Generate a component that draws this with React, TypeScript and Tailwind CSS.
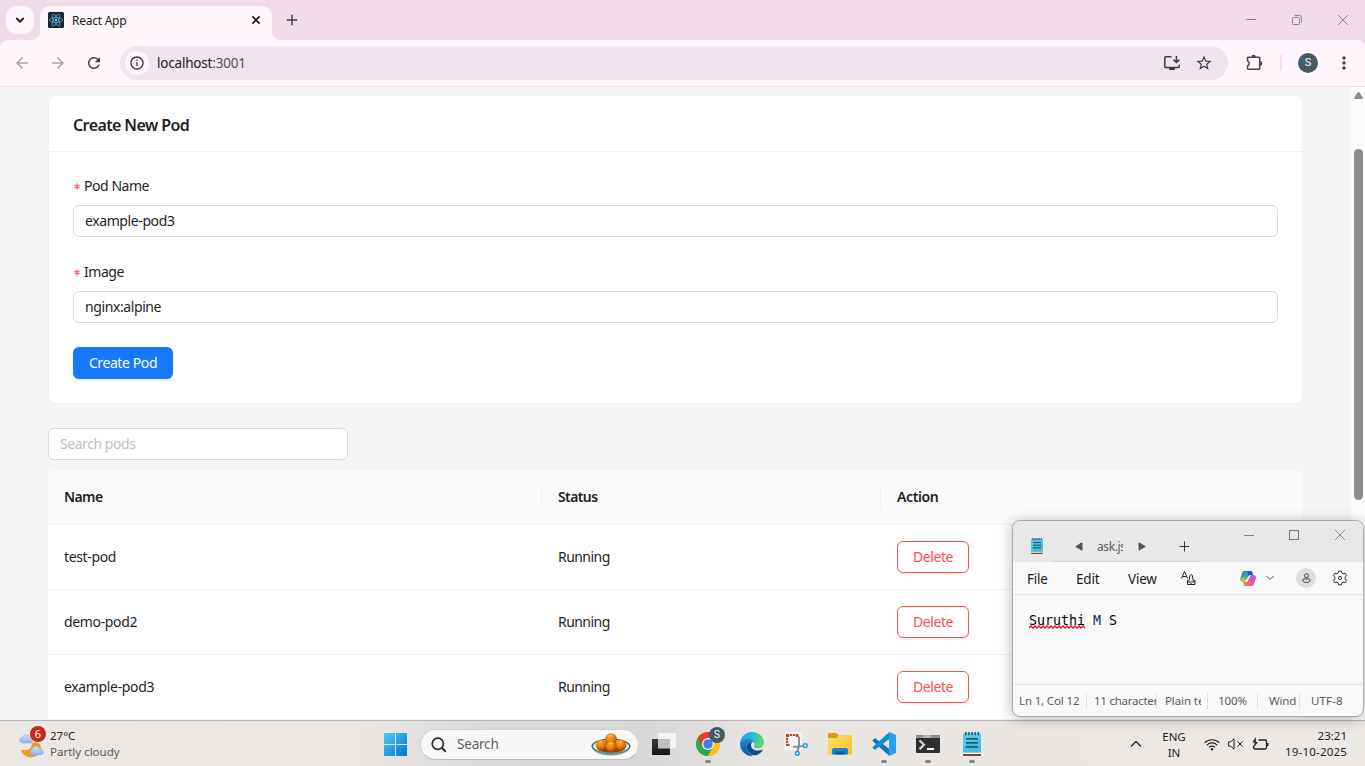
import type { ReactNode } from "react";
import {
  MdArrowBack,
  MdArrowForward,
  MdRefresh,
  MdInfoOutline,
  MdStarBorder,
  MdMoreVert,
} from "react-icons/md";

const pods = [
  { name: "test-pod", status: "Running" },
  { name: "demo-pod2", status: "Running" },
  { name: "example-pod3", status: "Running" },
];

function ReactLogo() {
  return (
    <svg width="16" height="16" viewBox="0 0 16 16">
      <rect width="16" height="16" rx="1.5" fill="#20232a" />
      <g fill="none" stroke="#4fb4cf" strokeWidth="0.8">
        <ellipse cx="8" cy="8" rx="6.6" ry="2.5" />
        <ellipse cx="8" cy="8" rx="6.6" ry="2.5" transform="rotate(60 8 8)" />
        <ellipse cx="8" cy="8" rx="6.6" ry="2.5" transform="rotate(120 8 8)" />
      </g>
      <circle cx="8" cy="8" r="1.3" fill="#61dafb" />
    </svg>
  );
}

function TabStrip() {
  return (
    <div className="flex h-10 items-start bg-[#f0dce7] pl-1.5 pt-1.5 text-[#1f1a1e]">
      <div className="flex size-7 items-center justify-center rounded-[10px] bg-[#fff7fb]">
        <svg width="10" height="8" viewBox="0 0 10 8" fill="none" stroke="#1f1a1e" strokeWidth="1.8">
          <path d="M1.3 2 5 5.7 8.7 2" />
        </svg>
      </div>
      <div className="relative ml-1.5 flex h-[34px] w-[232px] items-center rounded-t-[10px] bg-[#fff7fb] pb-1.5 pl-2 pr-2.5">
        <svg className="absolute -left-2 bottom-0" width="8" height="8" viewBox="0 0 8 8">
          <path d="M8 0v8H0a8 8 0 0 0 8-8Z" fill="#fff7fb" />
        </svg>
        <svg className="absolute -right-2 bottom-0" width="8" height="8" viewBox="0 0 8 8">
          <path d="M0 0v8h8a8 8 0 0 1-8-8Z" fill="#fff7fb" />
        </svg>
        <ReactLogo />
        <span className="ml-2 pt-0.5 text-[12px] tracking-[-0.25px]">React App</span>
        <svg className="ml-auto" width="12" height="12" viewBox="0 0 12 12" stroke="#1f1a1e" strokeWidth="1.6">
          <path d="M2.4 2.4l7.2 7.2M9.6 2.4L2.4 9.6" />
        </svg>
      </div>
      <svg className="ml-[14px] mt-2" width="12" height="12" viewBox="0 0 12 12" stroke="#4a4147" strokeWidth="1.5">
        <path d="M6 .8v10.4M.8 6h10.4" />
      </svg>
      <div className="ml-auto mr-[15px] mt-[6px] flex gap-[32px]">
        <svg width="14" height="16" viewBox="0 0 14 16" stroke="#8f838a" fill="none">
          <path d="M2 7.5h10" />
        </svg>
        <svg width="14" height="16" viewBox="0 0 14 16" stroke="#8f838a" fill="none">
          <rect x="2.5" y="5.5" width="7" height="7" rx="1" />
          <path d="M4.5 3.5h5a2 2 0 0 1 2 2v5" />
        </svg>
        <svg width="14" height="16" viewBox="0 0 14 16" stroke="#8f838a" fill="none">
          <path d="M2 3l10 10M12 3L2 13" />
        </svg>
      </div>
    </div>
  );
}

function AddressBar() {
  return (
    <div className="h-[47px] bg-[#f0dce7]">
      <div className="flex h-[47px] items-center rounded-t-lg border-b border-[#efdde7] bg-[#fff7fb] pl-[13px] pr-[11px]">
        <MdArrowBack size={18} color="#aaa2a7" className="shrink-0" />
        <MdArrowForward size={18} color="#aaa2a7" className="ml-[18px] shrink-0" />
        <MdRefresh size={18} color="#4f3d4a" className="ml-[18px] shrink-0" />
        <div className="ml-[17px] flex h-[34px] w-[1108px] shrink-0 items-center rounded-full bg-[#f0e5ee] pl-[5px] pr-[15px]">
          <div className="flex size-6 items-center justify-center rounded-full bg-[#fff7fb]">
            <MdInfoOutline size={16} color="#3d353a" />
          </div>
          <span className="ml-2 text-[13.5px] tracking-[-0.2px] text-[#1f1a1e]">
            localhost<span className="text-[#5a4f57]">:3001</span>
          </span>
          <svg className="ml-auto" width="18" height="18" viewBox="0 0 18 18" fill="none" stroke="#41383e" strokeWidth="1.5">
            <path d="M8.5 2.7H2.6a.8.8 0 0 0-.8.8v9.2c0 .5.3.8.8.8h12.8c.5 0 .8-.3.8-.8v-2M13.4 2v6M10.5 5.600l2.900 2.900 2.900-2.900" />
            <path d="M6.2 15h5.6" strokeWidth="2" />
          </svg>
          <MdStarBorder size={18} color="#41383e" className="ml-[14px]" />
        </div>
        <svg className="ml-[17px] shrink-0" width="18" height="18" viewBox="0 0 18 18">
          <path
            d="M3.2 3.300h10.800c.4 0 .7.3.7.7v10.500c0 .4-.3.7-.7.7H3.200c-.4 0-.7-.3-.7-.7v-2.600a2.700 2.700 0 0 0 0-5V4c0-.4.3-.7.7-.7Z"
            fill="none"
            stroke="#4f3d4a"
            strokeWidth="1.5"
          />
          <path d="M6.400 2.900a2.200 2.200 0 0 1 4.400 0ZM15.100 7.200a2.200 2.200 0 0 1 0 4.400Z" fill="#4f3d4a" />
        </svg>
        <div className="ml-[17px] h-4 w-0.5 shrink-0 bg-[#ffd6f1]" />
        <div className="ml-4 flex size-5 shrink-0 items-center justify-center rounded-full bg-[#455a64] font-['Roboto'] text-[11px] text-white">
          S
        </div>
        <MdMoreVert size={20} color="#4f3d4a" className="ml-4 shrink-0" />
      </div>
    </div>
  );
}

function Asterisk() {
  return (
    <svg className="mr-[4px] ml-px" width="6" height="7" viewBox="0 0 6 7" stroke="#ff4d4f" strokeWidth="1.100">
      <path d="M3 .3v6.400M.3 1.900l5.400 3.200M5.700 1.900L.3 5.100" />
    </svg>
  );
}

function Field({ label, value }: { label: string; value: string }) {
  return (
    <div className="mb-6">
      <div className="flex h-[30px] items-center pb-2 text-[14px]">
        <Asterisk />
        <span className="tracking-[-0.45px]">{label}</span>
      </div>
      <div className="flex h-8 items-center rounded-md border border-[#d9d9d9] bg-white px-[11px] tracking-[-0.4px]">
        {value}
      </div>
    </div>
  );
}

function CreateCard() {
  return (
    <div className="mx-12 h-[309px] rounded-lg border border-[#f0f0f0] bg-white">
      <div className="flex h-14 items-center border-b border-[#f0f0f0] px-6 pt-0.5 text-[16px] font-semibold tracking-[-0.6px]">
        Create New Pod
      </div>
      <div className="px-6 pt-[23px]">
        <Field label="Pod Name" value="example-pod3" />
        <Field label="Image" value="nginx:alpine" />
        <button className="block h-8 w-[100px] rounded-md bg-[#1677ff] text-[14px] tracking-[-0.4px] text-white shadow-[0_2px_0_rgba(5,145,255,0.1)]">
          Create Pod
        </button>
      </div>
    </div>
  );
}

function PodTable() {
  return (
    <div className="mx-12 mt-2.5 overflow-hidden rounded-t-lg bg-white tracking-[-0.35px]">
      <div className="grid h-[55px] grid-cols-[494px_339px_1fr] items-center border-b border-[#f0f0f0] bg-[#fafafa] font-semibold tracking-[-0.6px]">
        <div className="flex h-[22px] items-center border-r border-[#f0f0f0] pl-4">Name</div>
        <div className="flex h-[22px] items-center border-r border-[#f0f0f0] pl-4">Status</div>
        <div className="pl-4 tracking-[-0.4px]">Action</div>
      </div>
      {pods.map((pod) => (
        <div key={pod.name} className="grid h-[65px] grid-cols-[494px_339px_1fr] items-center border-b border-[#f0f0f0]">
          <div className="pl-4">{pod.name}</div>
          <div className="pl-4 tracking-[-0.55px]">{pod.status}</div>
          <div className="pl-4">
            <button className="block h-8 w-[72px] rounded-md border border-[#ff4d4f] bg-white tracking-[-0.45px] text-[#ff4d4f] shadow-[0_2px_0_rgba(255,38,5,0.06)]">
              Delete
            </button>
          </div>
        </div>
      ))}
    </div>
  );
}

function Page() {
  return (
    <div className="flex h-[633px] overflow-hidden bg-[#f5f5f5]">
      <div className="w-[1351px] pt-2 text-[14px] leading-[22px] text-[#1f1f1f]">
        <CreateCard />
        <div className="ml-12 mt-6 flex h-8 w-[300px] items-center rounded-md border border-[#d9d9d9] bg-white px-[11px] tracking-[-0.45px] text-[#bfbfbf]">
          Search pods
        </div>
        <PodTable />
      </div>
      <div className="flex w-[14px] flex-col items-center bg-[#fcfcfc] pl-px pt-[5px]">
        <svg width="9" height="7" viewBox="0 0 9 7">
          <path d="M3.6.6a1 1 0 0 1 1.8 0L8.8 5.600c.3.6 0 1.400-.8 1.400H1C.2 7-.1 6.200.2 5.600Z" fill="#8b8b8b" />
        </svg>
        <div className="mt-[50px] h-[351px] w-[9px] rounded-full bg-[#8b8b8b]" />
      </div>
    </div>
  );
}

function NotepadIcon({ className, size }: { className?: string; size: number }) {
  return (
    <svg className={className} width={size} height={size} viewBox="0 0 24 24">
      <rect x="3" y="20" width="18" height="4" rx="1" fill="#8a4412" />
      <path d="M3 22h18v-2H3z" fill="#f4f4f4" />
      <rect x="3" y="1.500" width="18" height="19" rx="1" fill="#5bc8e4" />
      <path d="M3 14l18-8v14.500H3z" fill="#38b2d6" opacity=".5" />
      <g fill="#10607f">
        <rect x="5" y="0" width="1.600" height="3.200" />
        <rect x="8.200" y="0" width="1.600" height="3.200" />
        <rect x="11.300" y="0" width="1.600" height="3.200" />
        <rect x="14.400" y="0" width="1.600" height="3.200" />
        <rect x="17.500" y="0" width="1.600" height="3.200" />
        <rect x="6" y="6" width="12" height="1.700" />
        <rect x="6" y="10" width="12" height="1.700" />
        <rect x="6" y="14" width="12" height="1.700" />
      </g>
    </svg>
  );
}

function CopilotIcon() {
  return (
    <svg width="16" height="15" viewBox="0 0 16 15">
      <defs>
        <linearGradient id="cpA" x1="0" y1="0" x2="0" y2="1">
          <stop offset="0" stopColor="#1b8fe0" />
          <stop offset=".5" stopColor="#2fa5b8" />
          <stop offset=".8" stopColor="#b5c23a" />
          <stop offset="1" stopColor="#f5b72a" />
        </linearGradient>
        <linearGradient id="cpB" x1="1" y1="0" x2="0" y2="1">
          <stop offset="0" stopColor="#a25bea" />
          <stop offset=".5" stopColor="#e8529b" />
          <stop offset="1" stopColor="#ff8a4a" />
        </linearGradient>
      </defs>
      <path d="M4.500 0h6c1 0 1.500.5 1.800 1.500L13 4H9.500L7 11H2.500C.5 11-.3 9.500.2 7.500L2 2C2.500.6 3.200 0 4.500 0Z" fill="url(#cpA)" />
      <path d="M8 .2h2.500c1 0 1.500.5 1.800 1.500L13 4H9.500L8.500 6Z" fill="#1359c4" />
      <path d="M11.500 15h-6c-1 0-1.500-.5-1.800-1.500L3 11h3.500L9 4h4.500c2 0 2.800 1.500 2.300 3.500L14 13c-.5 1.400-1.200 2-2.500 2Z" fill="url(#cpB)" />
      <path d="M9.200 4.200h1.600L7.200 11H5.400Z" fill="#fff" />
    </svg>
  );
}

function StatusCell({ className, children }: { className: string; children: ReactNode }) {
  return <div className={`flex h-4 items-center overflow-hidden whitespace-nowrap ${className}`}>{children}</div>;
}

function NotepadWindow() {
  return (
    <div className="absolute left-[1012px] top-[520px] h-[197px] w-[352px] overflow-hidden rounded-lg border border-[#a9a9a9] bg-[#f9f9f9] shadow-[0_2px_14px_rgba(0,0,0,0.28)]">
      <div className="flex h-[41px] items-start bg-[#e8e8e8]">
        <NotepadIcon size={16} className="ml-4 mt-[17px]" />
        <div className="ml-2 mt-[9px] flex h-8 w-[148px] items-center border-b border-[#d6d6d6] pt-0.5">
          <svg className="ml-[22px]" width="8" height="9" viewBox="0 0 8 9">
            <path d="M7 .8v7.400L.8 4.500Z" fill="#555" stroke="#555" strokeLinejoin="round" />
          </svg>
          <div className="ml-[14px] w-[26px] overflow-hidden whitespace-nowrap pt-px text-[12px] tracking-[-0.4px] text-[#5d5d5d]">ask.js</div>
          <svg className="ml-[15px] shrink-0" width="8" height="9" viewBox="0 0 8 9">
            <path d="M1 .8v7.400L7.200 4.500Z" fill="#555" stroke="#555" strokeLinejoin="round" />
          </svg>
          <svg className="ml-[33px] shrink-0" width="12" height="12" viewBox="0 0 12 12" stroke="#333">
            <path d="M5.500.5v10M.5 5.500h10" />
          </svg>
        </div>
        <div className="ml-auto mr-[17px] mt-2 flex gap-[34px]">
          <svg width="12" height="13" viewBox="0 0 12 13" stroke="#888" fill="none">
            <path d="M1 6.500h10" />
          </svg>
          <svg width="11" height="13" viewBox="0 0 11 13" stroke="#777" fill="none">
            <rect x=".5" y="1.500" width="9" height="9" />
          </svg>
          <svg width="12" height="13" viewBox="0 0 12 13" stroke="#888" fill="none">
            <path d="M1 1l10 10M11 1L1 11" />
          </svg>
        </div>
      </div>
      <div className="flex h-[33px] items-center border-b border-[#e5e5e5] text-[13.500px] tracking-[-0.200px] text-[#1b1b1b]">
        <span className="ml-3.5 w-[49px] pt-0.5">File</span>
        <span className="w-[52px] pt-0.5">Edit</span>
        <span className="w-[53px] pt-0.5">View</span>
        <svg width="15" height="15" viewBox="0 0 15 15" fill="none" stroke="#222">
          <path d="M.5 7.500 3.500.500l3 7M1.500 5.500h4" />
          <path d="M6.500 13.500V9.500H8l1-5a1.300 1.300 0 0 1 2.400 0l.8 5H14v4ZM6.500 11H14M10 13.500V12" />
        </svg>
        <div className="ml-[44px]">
          <CopilotIcon />
        </div>
        <svg className="ml-2.5" width="8" height="6" viewBox="0 0 8 6" fill="none" stroke="#555">
          <path d="M.5 1 4 4.500 7.500 1" />
        </svg>
        <div className="ml-[22px] flex size-5 items-center justify-center rounded-full bg-[#dedede]">
          <svg width="9" height="10" viewBox="0 0 9 10" fill="none" stroke="#444">
            <circle cx="4.500" cy="2.700" r="2" />
            <path d="M2 5.900h5c.8 0 1.200.5 1.200 1.100C8.200 8.700 6.500 9.500 4.500 9.500S.8 8.700.8 7c0-.6.4-1.100 1.200-1.100Z" />
          </svg>
        </div>
        <svg className="ml-4" width="16" height="16" viewBox="0 0 16 16" fill="none" stroke="#333" strokeLinejoin="round">
          <path d="M6.600 1.100h2.800l.5 2 1.300.7 2-.6 1.400 2.400-1.500 1.500v1.800l1.500 1.500-1.400 2.400-2-.6-1.300.7-.5 2H6.600l-.5-2-1.300-.7-2 .6-1.400-2.400 1.500-1.500V7.100L1.400 5.600l1.400-2.400 2 .6 1.300-.7Z" />
          <circle cx="8" cy="8" r="1.600" />
        </svg>
      </div>
      <div className="flex h-[90px] items-start border-b border-[#e5e5e5] pl-4 pt-4 font-['DejaVu_Sans_Mono'] text-[13.300px] leading-5 text-black">
        <span className="relative">
          Suruthi
          <svg className="absolute left-0 top-[14px]" width="56" height="4" viewBox="0 0 56 4" fill="none" stroke="#e81123" strokeWidth="1.300">
            <path d="M0 3l2-2 2 2 2-2 2 2 2-2 2 2 2-2 2 2 2-2 2 2 2-2 2 2 2-2 2 2 2-2 2 2 2-2 2 2 2-2 2 2 2-2 2 2 2-2 2 2 2-2 2 2 2-2 2 2" />
          </svg>
        </span>
        <span className="whitespace-pre text-[#0b2a66]"> M</span>
        <span className="whitespace-pre"> S</span>
      </div>
      <div className="flex h-8 items-center text-[11.500px] tracking-[-0.150px] text-[#5c5c5c]">
        <StatusCell className="ml-1.5 w-[68px] border-r border-[#e2e2e2]">Ln 1, Col 12</StatusCell>
        <StatusCell className="ml-[7px] w-[63px] border-r border-[#e2e2e2] tracking-[-0.25px]">11 character</StatusCell>
        <StatusCell className="ml-2 w-[36px] tracking-[-0.1px]">Plain te</StatusCell>
        <StatusCell className="w-[7px] border-r border-[#e2e2e2]">{null}</StatusCell>
        <StatusCell className="w-[50px] justify-center border-r border-[#e2e2e2]">100%</StatusCell>
        <StatusCell className="ml-[11px] w-[31px] border-r border-[#e2e2e2]">Wind</StatusCell>
        <StatusCell className="ml-[11px] tracking-[0.15px]">UTF-8</StatusCell>
      </div>
    </div>
  );
}

function WeatherIcon() {
  return (
    <svg width="28" height="30" viewBox="0 0 28 30">
      <defs>
        <linearGradient id="cloud" x1="0" y1="0" x2="0" y2="1">
          <stop offset="0" stopColor="#cfe0fa" />
          <stop offset="1" stopColor="#8fb0e8" />
        </linearGradient>
      </defs>
      <path d="M14 14c4-2 9 0 9 4a10 9 0 0 1-20 2.500c6 1.500 11 0 11-6.500Z" fill="#f59a1f" />
      <path d="M4 14a2.800 2.800 0 0 1 0-5.500A4.500 4.500 0 0 1 12 8a3.300 3.300 0 0 1 1 6Z" fill="url(#cloud)" stroke="#85a7e0" strokeWidth=".5" />
      <path d="M14 26a2.800 2.800 0 0 1 0-5.500 4.200 4.200 0 0 1 8-.5 3 3 0 0 1 .5 6Z" fill="url(#cloud)" stroke="#85a7e0" strokeWidth=".5" />
    </svg>
  );
}

function FoodIcon() {
  return (
    <svg width="40" height="24" viewBox="0 0 40 24">
      <defs>
        <radialGradient id="ball" cx=".4" cy=".3" r=".7">
          <stop offset="0" stopColor="#fda62c" />
          <stop offset=".55" stopColor="#e57c10" />
          <stop offset="1" stopColor="#a14604" />
        </radialGradient>
      </defs>
      <path d="M.5 13c1 5.500 8 9.500 19.500 9.500S38.500 18.500 39.500 13Z" fill="#6aa893" />
      <ellipse cx="20" cy="13" rx="19.500" ry="7.500" fill="#2f6672" />
      <ellipse cx="20" cy="13.300" rx="18" ry="6.500" fill="#dfe0c4" />
      <ellipse cx="20" cy="15" rx="14" ry="4.800" fill="#8f4408" />
      <circle cx="10.500" cy="12" r="5.400" fill="url(#ball)" />
      <circle cx="30" cy="12" r="5.400" fill="url(#ball)" />
      <circle cx="20" cy="6.200" r="6" fill="url(#ball)" />
      <circle cx="20" cy="13.500" r="5.300" fill="url(#ball)" />
      <path d="M17 3.500l3-1 2 .7M17.500 10.800l2.500-1 2 .8M8.500 9.500l2-.8M28.500 9.500l2-.8" stroke="#f6dc55" fill="none" />
    </svg>
  );
}

function ChromeIcon() {
  return (
    <svg width="24" height="24" viewBox="0 0 24 24">
      <circle cx="12" cy="12" r="12" fill="#fbc116" />
      <path d="M12 12 1.600 6A12 12 0 0 0 12 24l5.200-9Z" fill="#2da94f" />
      <path d="M1.600 6a12 12 0 0 1 20.800 0H12l-5.200 9Z" fill="#e33b2e" />
      <path d="M12 6h10.400A12 12 0 0 1 12 24l5.200-9Z" fill="#fbc116" />
      <circle cx="12" cy="12" r="6" fill="#fff" />
      <circle cx="12" cy="12" r="4.800" fill="#3a7fe8" />
    </svg>
  );
}

function EdgeIcon() {
  return (
    <svg width="24" height="24" viewBox="0 0 24 24">
      <defs>
        <linearGradient id="edA" x1="0" y1=".3" x2="1" y2=".5">
          <stop offset="0" stopColor="#1f9fe8" />
          <stop offset=".55" stopColor="#2bc1d0" />
          <stop offset="1" stopColor="#62dd55" />
        </linearGradient>
        <linearGradient id="edB" x1="0" y1="0" x2="0" y2="1">
          <stop offset="0" stopColor="#1b86dd" />
          <stop offset="1" stopColor="#0c59a4" />
        </linearGradient>
      </defs>
      <path d="M12 0c7.500 0 12 5.500 12 10.500 0 3.500-2.700 5.800-6 5.800-3.500 0-4.500-1.300-4-2.100C16 11 13 7 8.500 7 4 7 .5 9.500 0 12 0 5 5.500 0 12 0Z" fill="url(#edA)" />
      <path d="M0 12c.5-3 4-5.300 8.500-5.300 3.500 0 6.300 2.600 6.300 5.300-1-1.800-2.300-2.500-3.800-2.500-3 .5-4.500 3.500-4 7C7.500 20 10 23 14 23.800 6 25 0 19 0 12Z" fill="url(#edB)" />
      <path d="M7 16.500c.5 4 4.500 7.500 10 6.500 2.500-1 4.500-2.500 5.600-4.700.3-.6-.2-.9-.8-.6C17 20 10.500 17.500 11 13c.1-1.500.8-2.500 1.500-3.200C9 9 6.500 12.500 7 16.500Z" fill="#114a8b" />
    </svg>
  );
}

function SnipIcon() {
  return (
    <svg width="24" height="24" viewBox="0 0 24 24">
      <rect x="0" y="0" width="18" height="18" rx="2" fill="#f7f7f7" />
      <g fill="#d4410f">
        <path d="M2 2h3v3H2ZM5.700 2h2.600v2H5.700ZM9 2h2.300v2H9ZM12 2h2.500v3H12Z" />
        <path d="M2 5.700h2v2.300H2ZM2 8.700h2V11H2ZM2 11.700h3.500V14H2Z" />
      </g>
      <path d="M15 4.500v10l-1.800 5M9 14.800h6l5-1" stroke="#8a9097" strokeWidth="2" fill="none" />
      <circle cx="13.300" cy="21.300" r="1.900" fill="#fff" stroke="#2b9be0" strokeWidth="1.500" />
      <circle cx="21.300" cy="13.600" r="1.900" fill="#fff" stroke="#2b9be0" strokeWidth="1.500" />
    </svg>
  );
}

function FolderIcon() {
  return (
    <svg width="24" height="22" viewBox="0 0 24 22">
      <defs>
        <linearGradient id="fold" x1="0" y1="0" x2="1" y2="1">
          <stop offset="0" stopColor="#ffdf6e" />
          <stop offset="1" stopColor="#f9bf21" />
        </linearGradient>
      </defs>
      <path d="M0 1.500C0 .6.600 0 1.500 0h6c.6 0 1 .2 1.500.7L10.500 2H23c.6 0 1 .4 1 1v5H0Z" fill="#dc9c10" />
      <path d="M0 5h8.500L11 2h13V20.500c0 .6-.4 1-1 1H1c-.6 0-1-.4-1-1Z" fill="url(#fold)" />
      <path d="M4 21.500v-4.500c0-1 .8-2 2-2h12c1.200 0 2 1 2 2v4.500Z" fill="#1583d6" />
      <path d="M7 18.500h10v3H7Z" fill="#0c5aa8" />
    </svg>
  );
}

function VSCodeIcon() {
  return (
    <svg width="24" height="24" viewBox="0 0 24 24">
      <path d="M17.500 24 .9 9.300c-.5-.5-.5-1 0-1.500l1.300-1.200c.5-.4.9-.4 1.400 0L18 17.500Z" fill="#0b73bd" />
      <path d="M17.500 0 .9 14.700c-.5.5-.5 1 0 1.500l1.300 1.200c.5.4.9.4 1.400 0L18 6.500Z" fill="#118bd6" />
      <path d="M17.500 0 24 3v18l-6.500 3c-.4 0-.5-.4-.5-.8V.8c0-.4.1-.8.5-.8Z" fill="#27a2ee" />
    </svg>
  );
}

function TerminalIcon() {
  return (
    <svg width="24" height="18" viewBox="0 0 24 18">
      <rect width="24" height="18" rx="1" fill="#2f2f31" />
      <path d="M1 0h22c.6 0 1 .4 1 1v2H0V1c0-.6.400-1 1-1Z" fill="#8d8d8d" />
      <path d="M7 0h8v3H7Z" fill="#b3b3b3" />
      <path d="M3.500 5.500 8 9.800l-4.500 4.300" fill="none" stroke="#d8d8d8" strokeWidth="2.200" />
      <path d="M11 14h7" stroke="#fff" strokeWidth="2" />
    </svg>
  );
}

function TaskbarApp({ running, children }: { running?: boolean; children: ReactNode }) {
  return (
    <div className="relative flex h-[46px] w-11 items-center justify-center pt-px">
      {children}
      {running && <span className="absolute bottom-1 h-[3px] w-1.5 rounded-full bg-[#858585]" />}
    </div>
  );
}

function Taskbar() {
  return (
    <div className="flex h-[46px] items-center border-t border-[#b9b8b7] bg-[linear-gradient(90deg,#ebe7e3_0%,#eae7e4_26%,#dad9d9_36%,#d9d8d8_48%,#e8e5e2_56%,#ece8e4_100%)] text-[#1d1d1d]">
      <div className="relative ml-[18px] flex w-[365px] items-center">
        <WeatherIcon />
        <span className="absolute left-3 top-[-2px] flex size-4 items-center justify-center rounded-full bg-[#c42b1c] text-[11px] leading-none text-white">
          6
        </span>
        <div className="ml-1 text-[11.500px] leading-4">
          <div>27°C</div>
          <div className="text-[#5b5a58]">Partly cloudy</div>
        </div>
      </div>
      <svg className="mt-0.5 ml-px" width="23" height="23" viewBox="0 0 23 23">
        <defs>
          <linearGradient id="win" x1="0" y1="0" x2="1" y2="1">
            <stop offset="0" stopColor="#4ccbf8" />
            <stop offset="1" stopColor="#0272d2" />
          </linearGradient>
        </defs>
        <path d="M0 0h11v11H0ZM12 0h11v11H12ZM0 12h11v11H0ZM12 12h11v11H12Z" fill="url(#win)" />
      </svg>
      <div className="ml-[13px] mt-0.5 flex h-[31px] w-[219px] items-center rounded-full border border-b-[#bdbdbd] border-[#d0d0d0] bg-[#f7f7f7] pl-[10px] pr-[7px]">
        <svg width="16" height="16" viewBox="0 0 16 16" fill="none" stroke="#2a2a2a" strokeWidth="1.700">
          <circle cx="6.800" cy="6.800" r="5.600" />
          <path d="M10.800 10.800l4 4" strokeWidth="2" />
        </svg>
        <span className="ml-[10px] text-[13.500px] tracking-[-0.200px] text-[#5f5f5f]">Search</span>
        <div className="ml-auto">
          <FoodIcon />
        </div>
      </div>
      <div className="ml-[3px] flex">
        <TaskbarApp>
          <svg width="24" height="22" viewBox="0 0 24 22">
            <defs>
              <linearGradient id="tvBack" x1="0" y1="0" x2="0" y2="1">
                <stop offset="0" stopColor="#3c3c3c" />
                <stop offset="1" stopColor="#141414" />
              </linearGradient>
            </defs>
            <rect x="0" y="6" width="18" height="16" rx=".5" fill="url(#tvBack)" />
            <rect x="6" y="0" width="18" height="15" rx="1" fill="#f4f4f4" />
            <rect x="6" y="6" width="12" height="9.500" fill="#bfbfbf" />
          </svg>
        </TaskbarApp>
        <TaskbarApp running>
          <ChromeIcon />
          <span className="absolute right-[5px] top-[6px] flex size-4 items-center justify-center rounded-full bg-[#455a64] font-['Roboto'] text-[10px] leading-none text-white">
            S
          </span>
        </TaskbarApp>
        <TaskbarApp>
          <EdgeIcon />
        </TaskbarApp>
        <TaskbarApp>
          <SnipIcon />
        </TaskbarApp>
        <TaskbarApp>
          <FolderIcon />
        </TaskbarApp>
        <TaskbarApp running>
          <VSCodeIcon />
        </TaskbarApp>
        <TaskbarApp running>
          <TerminalIcon />
        </TaskbarApp>
        <TaskbarApp running>
          <NotepadIcon size={24} />
        </TaskbarApp>
      </div>
      <div className="ml-auto mr-[18px] flex items-center pt-px">
        <svg width="12" height="8" viewBox="0 0 12 8" fill="none" stroke="#222" strokeWidth="1.300">
          <path d="M1 6.500 6 1.500l5 5" />
        </svg>
        <div className="ml-[18px] w-[28px] pt-px text-center text-[11.500px] leading-4">
          <div>ENG</div>
          <div>IN</div>
        </div>
        <svg className="ml-4" width="16" height="13" viewBox="0 0 16 13" fill="none" stroke="#222" strokeWidth="1.100">
          <path d="M.6 4.800a10.400 10.400 0 0 1 14.800 0M2.800 7.100a7.300 7.300 0 0 1 10.400 0M5 9.400a4.200 4.200 0 0 1 6 0" />
          <circle cx="8" cy="11.300" r="1.200" fill="#222" stroke="none" />
        </svg>
        <svg className="ml-2" width="16" height="12" viewBox="0 0 16 12" fill="none" stroke="#222">
          <path d="M.5 3.800h2.200L6 .8v10.400L2.700 8.200H.5ZM9.500 3.500l5 5M14.500 3.500l-5 5" />
        </svg>
        <svg className="ml-2" width="17" height="14" viewBox="0 0 17 14" fill="none" stroke="#222" strokeWidth="1.300">
          <path d="M6.500 3h6.600c.8 0 1.400.6 1.400 1.400v6.200c0 .8-.6 1.400-1.400 1.400H3c-.8 0-1.400-.6-1.400-1.400V8.500" />
          <path d="M15.600 6v3" strokeWidth="1.800" />
          <path d="M3.800 0 .4 5.500h2.300l-.8 5L6 5H3.800Z" fill="#222" stroke="none" />
        </svg>
        <div className="ml-[15px] w-[63px] whitespace-nowrap text-right text-[11.500px] leading-4">
          <div>23:21</div>
          <div className="tracking-[0.2px]">19-10-2025</div>
        </div>
      </div>
    </div>
  );
}

export default function App() {
  return (
    <div className="relative h-[766px] w-[1365px] overflow-hidden font-['Noto_Sans','Open_Sans',sans-serif]">
      <TabStrip />
      <AddressBar />
      <Page />
      <Taskbar />
      <NotepadWindow />
    </div>
  );
}
